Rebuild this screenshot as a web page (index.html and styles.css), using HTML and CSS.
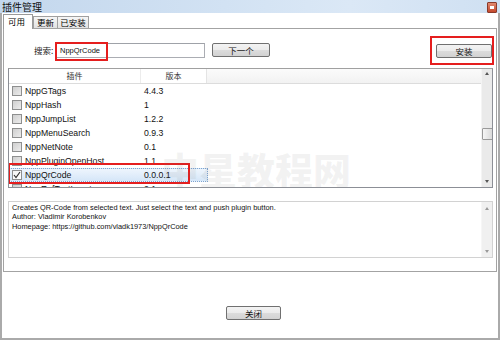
FILE: index.html
```html
<!DOCTYPE html>
<html>
<head>
<meta charset="utf-8">
<link rel="stylesheet" href="styles.css">
</head>
<body>
<div class="window">
  <div class="titlebar">
    <span class="title">插件管理</span>
    <span class="close-btn"><span class="close-glyph"></span></span>
  </div>
  <div class="frame">
    <div class="tabs">
      <div class="tab active">可用</div>
      <div class="tab t2">更新</div>
      <div class="tab t3">已安装</div>
    </div>
    <div class="panel">
      <div class="search-row">
        <span class="search-label">搜索:</span>
        <div class="input">NppQrCode<span class="mark mark-input"></span></div>
        <button class="btn btn-next">下一个</button>
        <button class="btn btn-install">安装<span class="mark mark-install"></span></button>
      </div>
      <div class="list">
        <div class="list-main">
          <div class="list-head">
            <div class="hcol c1">插件</div>
            <div class="hcol c2">版本</div>
            <div class="hcol c3"></div>
          </div>
          <div class="rows">
            <div class="row"><span class="cb"></span><span class="name">NppGTags</span><span class="ver">4.4.3</span></div>
            <div class="row"><span class="cb"></span><span class="name">NppHash</span><span class="ver">1</span></div>
            <div class="row"><span class="cb"></span><span class="name">NppJumpList</span><span class="ver">1.2.2</span></div>
            <div class="row"><span class="cb"></span><span class="name">NppMenuSearch</span><span class="ver">0.9.3</span></div>
            <div class="row"><span class="cb"></span><span class="name">NppNetNote</span><span class="ver">0.1</span></div>
            <div class="row"><span class="cb"></span><span class="name">NppPluginOpenHost</span><span class="ver">1.1</span></div>
            <div class="row selected"><span class="cb checked"><svg width="8" height="8" viewBox="0 0 8 8"><polyline points="1,4 3,6.5 7,1" fill="none" stroke="#333" stroke-width="1.2"/></svg></span><span class="name">NppQrCode</span><span class="ver">0.0.0.1</span><span class="mark mark-row"></span></div>
            <div class="row"><span class="cb"></span><span class="name">NppRefTextLocator</span><span class="ver">2.1</span></div>
          </div>
        </div>
        <div class="vscroll">
          <span class="arrow up"></span>
          <span class="thumb"></span>
          <span class="arrow down"></span>
        </div>
        <div class="watermark">中星教程网</div>
      </div>
      <div class="desc">
        <div class="desc-text">
          <div>Creates QR-Code from selected text. Just select the text and push plugin button.</div>
          <div>Author: Vladimir Korobenkov</div>
          <div>Homepage: https://github.com/vladk1973/NppQrCode</div>
        </div>
        <div class="vscroll plain">
          <span class="arrow up light"></span>
          <span class="arrow down light"></span>
        </div>
      </div>
    </div>
    <div class="footer">
      <button class="btn btn-close">关闭</button>
    </div>
  </div>
</div>
</body>
</html>
```

FILE: styles.css
```css
* { box-sizing: border-box; }
html, body { margin: 0; padding: 0; background: #fff; }
body {
  font-family: "Liberation Sans", "Noto Sans CJK SC", sans-serif;
  color: #000;
}
.window {
  width: 500px;
  height: 340px;
  display: flex;
  flex-direction: column;
  overflow: hidden;
}
.titlebar {
  height: 13px;
  display: flex;
  align-items: center;
  justify-content: space-between;
  background: linear-gradient(to right, #c3d7ed 0%, #d2e2f3 45%, #dbe8f6 70%, #cfe0f2 100%);
  padding: 0 3px 0 2px;
}
.title {
  font-family: "Noto Sans CJK SC", sans-serif;
  font-size: 10px;
  line-height: 13px;
  color: #111;
}
.close-btn {
  width: 10px;
  height: 11px;
  margin-top: 1px;
  background: linear-gradient(#e08a70, #c5482c);
  border: 1px solid #8a3a2a;
  border-radius: 1px;
  display: flex;
  align-items: center;
  justify-content: center;
}
.close-glyph {
  width: 4px;
  height: 3px;
  background: #fff;
}
.frame {
  flex: 1;
  display: flex;
  flex-direction: column;
  border-left: 2px solid #aaaaaa;
  border-right: 2px solid #aaaaaa;
  border-bottom: 2px solid #aaaaaa;
  background: #fff;
}
.tabs {
  height: 15px;
  display: flex;
  align-items: flex-end;
  padding-left: 1px;
}
.tab {
  font-family: "Noto Sans CJK SC", sans-serif;
  font-size: 8.5px;
  height: 12px;
  line-height: 11px;
  border: 1px solid #a0a0a0;
  border-bottom: none;
  background: linear-gradient(#f6f6f6, #e2e2e2);
  text-align: center;
}
.tab.active {
  width: 30px;
  height: 15px;
  line-height: 13px;
  background: #fff;
  margin-bottom: -1px;
  position: relative;
  z-index: 2;
  text-align: left;
  padding-left: 4px;
  border-color: #9a9a9a;
}
.tab.t2 { width: 25px; }
.tab.t3 { width: 32px; margin-left: -1px; }
.panel {
  height: 244px;
  margin: 0 1px;
  border: 1px solid #a3a3a3;
  display: flex;
  flex-direction: column;
}
.search-row {
  margin-top: 14px;
  height: 15px;
  display: flex;
  align-items: flex-start;
  padding-left: 30px;
  padding-right: 4px;
}
.search-label {
  font-family: "Noto Sans CJK SC", sans-serif;
  width: 21px;
  font-size: 8.5px;
  line-height: 15px;
  color: #222;
}
.input {
  position: relative;
  width: 150px;
  height: 15px;
  border: 1px solid #abadb3;
  border-top-color: #9fa2a8;
  font-size: 7.5px;
  line-height: 13px;
  padding-left: 4px;
  color: #111;
}
.btn {
  font-family: "Noto Sans CJK SC", sans-serif;
  font-size: 8.5px;
  height: 14px;
  padding: 0;
  line-height: 12px;
  border: 1px solid #707070;
  border-radius: 2px;
  background: linear-gradient(#f3f3f3 0%, #ebebeb 50%, #dcdcdc 51%, #d2d2d2 100%);
  color: #111;
}
.btn-next {
  width: 58px;
  margin-left: 7px;
}
.btn-install {
  position: relative;
  width: 56px;
  margin-left: auto;
  margin-top: 1px;
}
.mark {
  position: absolute;
  border: 2px solid #e51e1e;
  pointer-events: none;
}
.mark-input {
  left: -1px;
  top: -2px;
  width: 53px;
  height: 19px;
}
.mark-install {
  left: -7px;
  top: -9px;
  width: 64px;
  height: 29px;
}
.list {
  position: relative;
  margin: 10px 3px 0 4px;
  height: 120px;
  border: 1px solid #8c8f96;
  border-top-color: #a0a0a0;
  display: flex;
  overflow: hidden;
}
.list-main {
  flex: 1;
  display: flex;
  flex-direction: column;
}
.list-head {
  height: 15px;
  display: flex;
  border-bottom: 1px solid #dcdcdc;
  font-family: "Noto Sans CJK SC", sans-serif;
  font-size: 8px;
  line-height: 14px;
  color: #333;
}
.hcol { text-align: center; }
.hcol.c1 { width: 132px; border-right: 1px solid #ececec; background: #fff; }
.hcol.c2 { width: 66px; border-right: 1px solid #e4e4e4; background: #fff; }
.hcol.c3 { flex: 1; background: linear-gradient(#fbfbfb, #f2f2f2); }
.rows {
  display: flex;
  flex-direction: column;
}
.row {
  position: relative;
  width: 199px;
  height: 14px;
  display: flex;
  align-items: center;
  font-size: 8.7px;
  color: #111;
  border: 1px solid transparent;
}
.row .cb {
  width: 10px;
  height: 10px;
  margin-left: 2px;
  border: 1px solid #8e8f8f;
  background: linear-gradient(135deg, #cfcfcf, #ececec);
  display: flex;
  align-items: center;
  justify-content: center;
}
.row .cb.checked { background: linear-gradient(135deg, #f4f4f4, #ffffff); }
.row .name { width: 119px; margin-left: 3px; }
.row .ver { margin-left: 0; }
.row.selected {
  background: linear-gradient(#eef5fd, #d5e6f8);
  border: 1px dotted #7ea4d0;
}
.mark-row {
  left: -2px;
  top: -6px;
  width: 182px;
  height: 21px;
}
.vscroll {
  position: relative;
  width: 11px;
  background: #eaeaea;
  border-left: 1px solid #f4f4f4;
  display: flex;
  flex-direction: column;
  align-items: center;
}
.arrow {
  width: 0;
  height: 0;
  border-left: 2.5px solid transparent;
  border-right: 2.5px solid transparent;
}
.arrow.up {
  border-bottom: 3px solid #555;
  margin-top: 3px;
}
.arrow.down {
  border-top: 3px solid #555;
  margin-top: auto;
  margin-bottom: 4px;
}
.arrow.light.up { border-bottom-color: #999; margin-top: 5px; }
.arrow.light.down { border-top-color: #999; }
.thumb {
  width: 11px;
  height: 12px;
  margin-top: 53px;
  border: 1px solid #9a9a9a;
  border-radius: 1px;
  background: linear-gradient(to right, #f6f6f6, #dadada);
}
.watermark {
  position: absolute;
  left: 152px;
  top: 80px;
  font-family: "Noto Sans CJK SC", sans-serif;
  font-weight: 900;
  font-size: 38px;
  line-height: 40px;
  color: rgba(120, 120, 120, 0.09);
  pointer-events: none;
  white-space: nowrap;
}
.desc {
  margin: 13px 3px 0 4px;
  height: 57px;
  border: 1px solid #d2d2d2;
  display: flex;
}
.desc-text {
  flex: 1;
  padding: 1px 0 0 3px;
  font-size: 7.4px;
  line-height: 9.3px;
  color: #111;
}
.vscroll.plain {
  background: #f0f0f0;
  border-left: 1px solid #f6f6f6;
}
.footer {
  flex: 1;
  padding-top: 34px;
  padding-left: 224px;
}
.btn-close {
  display: block;
  width: 55px;
}
```
